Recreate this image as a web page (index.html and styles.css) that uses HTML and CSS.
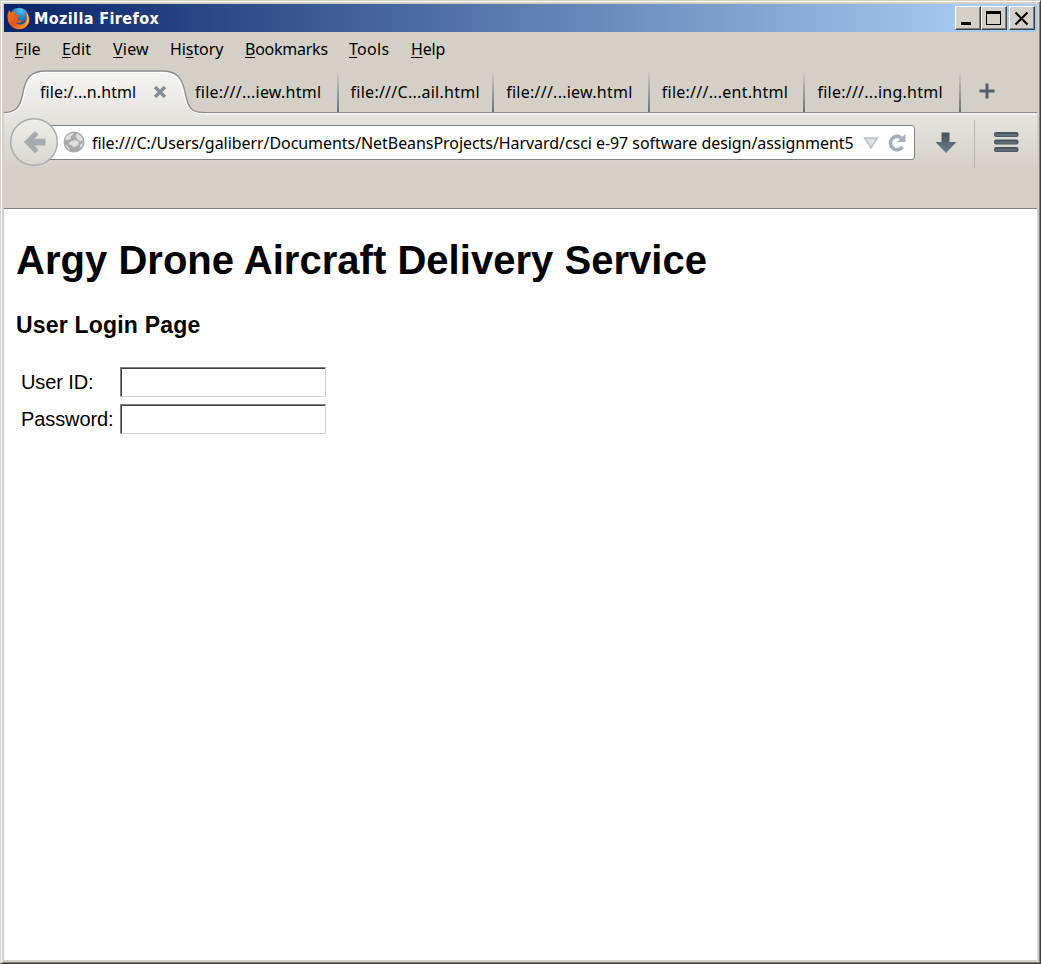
FILE: index.html
```html
<!DOCTYPE html>
<html lang="en">
<head>
<meta charset="utf-8">
<title>Mozilla Firefox</title>
<link rel="stylesheet" href="styles.css">
</head>
<body>
<div class="window">
  <header class="titlebar">
    <svg class="logo" width="24" height="24" viewBox="0 0 24 24">
      <defs>
        <radialGradient id="globe" cx=".6" cy=".1" r=".9"><stop offset="0" stop-color="#5cc4ec"/><stop offset=".5" stop-color="#1f7fc0"/><stop offset="1" stop-color="#0c3a78"/></radialGradient>
        <linearGradient id="fox" x1="0" y1="0" x2="1" y2="1"><stop offset="0" stop-color="#ee7d22"/><stop offset=".5" stop-color="#e2551a"/><stop offset="1" stop-color="#fbb426"/></linearGradient>
      </defs>
      <circle cx="12" cy="10.500" r="9.800" fill="url(#globe)"/>
      <path d="M2.100 3.100 4 5.700C5.500 4.500 7.500 4.500 9 5.100 8.500 6 8.500 7 9.500 7.700L12.500 8.500c0 1.200-2 1.500-2.400 3 .6 2.500 3.400 2 5.200 1.500-1 3-4.500 3.500-6.500 2.500 3 3.500 9 2.500 10.500-2.500.7-3 .2-6-1.500-8.500 5 3 5.800 9 3 13C17.500 23 10.500 23.500 6 20.500.5 17-1 9.500 2.100 3.100Z" fill="url(#fox)"/>
      <path d="M19.100 5c4 5 3 11-1 14.500 3-4.500 3-9 1-14.500Z" fill="#ffd640"/>
    </svg>
    <span class="caption">Mozilla Firefox</span>
    <div class="controls">
      <span class="ctl"><svg width="22" height="20" viewBox="0 0 22 20"><path d="M4 14h10v3H4z"/></svg></span>
      <span class="ctl"><svg width="22" height="20" viewBox="0 0 22 20"><path d="M3 3h15v14H3zM4 6v10h13V6z" fill-rule="evenodd"/></svg></span>
      <span class="ctl close"><svg width="22" height="20" viewBox="0 0 22 20"><path d="m4.500 4.500 12 12M16.500 4.500l-12 12" stroke="#000" stroke-width="2"/></svg></span>
    </div>
  </header>
  <nav class="menu">
    <span class="m-file"><u>F</u>ile</span><span class="m-edit"><u>E</u>dit</span><span class="m-view"><u>V</u>iew</span><span class="m-history">Hi<u>s</u>tory</span><span class="m-bookmarks"><u>B</u>ookmarks</span><span class="m-tools"><u>T</u>ools</span><span class="m-help"><u>H</u>elp</span>
  </nav>
  <div class="tabs">
    <div class="tab active">
      <svg class="shape" width="200" height="46" viewBox="0 0 200 46">
        <defs><linearGradient id="tabfill" x1="0" y1="0" x2="0" y2="1"><stop offset="0" stop-color="#f5f4f2"/><stop offset="1" stop-color="#e6e4e0"/></linearGradient></defs>
        <path d="M0 46V43C12 43 16 39 19 25 22 7 28 1.500 42 1.500H158C173 1.500 178 8 182 25 185 39 188 43 200 43V46Z" fill="url(#tabfill)"/>
        <path d="M0 43.500C12 43.500 17 39 20 26 23 8 29 2.500 43 2.500H157C171 2.500 176 9 180 26 183 40 188 43.500 200 43.500" fill="none" stroke="#fff"/>
        <path d="M0 42.500C11 42.500 15.500 38 18.500 25 21.500 7 27 1 42 1H158C173 1 178 7 181.500 24 184.500 39 188 42.500 200 42.500" fill="none" stroke="#8a8e92" stroke-width="1.300"/>
      </svg>
      <span class="label">file:/...n.html</span>
      <svg class="x" width="14" height="14" viewBox="0 0 14 14"><path d="m2 2 10 10M12 2 2 12" stroke="#858d94" stroke-width="3.400"/></svg>
    </div>
    <div class="tab"><span class="label">file:///...iew.html</span></div>
    <div class="tab"><span class="label">file:///C...ail.html</span></div>
    <div class="tab"><span class="label">file:///...iew.html</span></div>
    <div class="tab"><span class="label">file:///...ent.html</span></div>
    <div class="tab"><span class="label">file:///...ing.html</span></div>
    <svg class="plus" width="16" height="16" viewBox="0 0 16 16"><path d="M8 .5v15M.5 8h15" stroke="#53606b" stroke-width="3"/></svg>
  </div>
  <div class="toolbar">
    <svg class="back" width="50" height="50" viewBox="0 0 50 50">
      <defs><linearGradient id="backfill" x1="0" y1="0" x2="0" y2="1"><stop offset="0" stop-color="#eeedea"/><stop offset="1" stop-color="#d9d6ce"/></linearGradient></defs>
      <circle cx="25" cy="25" r="23.300" fill="url(#backfill)" stroke="#a5acb1" stroke-width="1.500"/>
      <path d="M15.500 25 26 14.500l3 3-4.600 4.700H36v5.800H24.400l4.600 4.700-3 3Z" fill="#a5abae" stroke="#a5abae" stroke-linejoin="round"/>
    </svg>
    <div class="urlbar">
      <svg class="world" width="22" height="22" viewBox="0 0 22 22">
        <circle cx="11" cy="11" r="10.500" fill="#a9a9a9"/>
        <path d="M2 8C3.500 4.500 7 2 10.500 2L10 4 7.500 5.500 8 7.500 4 9.500ZM14 2.500l4 2.500 2 4-2.500 1.500L14 8 12.500 5ZM8 10l5-1 3 2-1 3-4 2.500-2-2-3.500-1.500ZM17.500 13l2.500-.5-1.500 3.500L16.500 17ZM2.500 13l3 3.500 1.500 3C4.500 18 3 16 2.500 13Z" fill="#dedede"/>
      </svg>
      <span class="url">file:///C:/Users/galiberr/Documents/NetBeansProjects/Harvard/csci e-97 software design/assignment5</span>
      <svg class="drop" width="16" height="12" viewBox="0 0 16 12"><path d="M1.500 1h13L8 11Z" fill="#dce0e4" stroke="#b8c0c7" stroke-width="1.400"/></svg>
      <svg class="reload" width="18" height="19" viewBox="0 0 18 19"><path d="M13.500 5A6.700 6.700 0 1 0 14.500 14" fill="none" stroke="#a5afba" stroke-width="3.600"/><path d="M17.500 1v8H9Z" fill="#a5afba"/></svg>
    </div>
    <svg class="down" width="22" height="22" viewBox="0 0 22 22"><defs><linearGradient id="ink" x1="0" y1="0" x2="0" y2="1"><stop offset="0" stop-color="#46515c"/><stop offset="1" stop-color="#6e7e8c"/></linearGradient></defs><path d="M6.500.5h8V10H21.500L11 21 .5 10H6.500Z" fill="url(#ink)"/></svg>
    <div class="burger"><svg width="26" height="22" viewBox="0 0 26 22"><g fill="#4d5863"><rect x="1" y="1" width="24.500" height="5" rx="2"/><rect x="1" y="8.500" width="24.500" height="5" rx="2"/><rect x="1" y="16" width="24.500" height="5" rx="2"/></g><path d="M2.500 4h21M2.500 11.500h21M2.500 19h21" stroke="#687683" stroke-width="1.300"/></svg></div>
  </div>
  <main class="page">
    <h1>Argy Drone Aircraft Delivery Service</h1>
    <h3>User Login Page</h3>
    <form class="login">
      <label for="uid">User ID:</label><input id="uid" type="text">
      <label for="pwd">Password:</label><input id="pwd" type="password">
    </form>
  </main>
</div>
</body>
</html>
```
FILE: styles.css
```css
* { box-sizing: border-box; }
body { margin: 0; font-family: "Noto Sans", sans-serif; font-size: 16px; color: #000; }
svg { display: block; flex: none; }
.window {
  width: 1041px; height: 964px; display: flex; flex-direction: column; overflow: hidden;
  background: #d4d0c8; border: 1px solid; border-color: #d4d0c8 #404040 #404040 #d4d0c8;
  box-shadow: inset 1px 1px #fff, inset -1px -1px #808080; padding: 3px;
}
.titlebar { height: 28px; flex: none; display: flex; align-items: center; background: linear-gradient(90deg, #0a246a, #a6caf0 94%); padding: 0 2px 0 3px; }
.logo { margin-top: 1px; }
.caption { margin-left: 3px; font: bold 16px "DejaVu Sans Condensed", "DejaVu Sans", sans-serif; letter-spacing: .4px; color: #fff; white-space: nowrap; }
.controls { margin-left: auto; display: flex; }
.ctl { width: 26px; height: 24px; border: 1px solid; border-color: #fff #404040 #404040 #fff; background: #d4d0c8; box-shadow: inset -1px -1px #808080; padding: 1px; }
.close { margin-left: 2px; }
.menu { height: 38px; flex: none; padding: 5px 0 0 11px; display: flex; line-height: 24px; white-space: nowrap; }
.menu u { text-underline-offset: 2px; text-decoration-thickness: 1px; }
.m-file { width: 47px; }
.m-edit { width: 51px; letter-spacing: .1px; }
.m-view { width: 57px; letter-spacing: .2px; }
.m-history { width: 75px; letter-spacing: -.1px; }
.m-bookmarks { width: 104px; letter-spacing: -.25px; }
.m-tools { width: 62px; letter-spacing: .3px; }
.m-help { letter-spacing: -.2px; }
.tabs { height: 43px; flex: none; display: flex; border-bottom: 1px solid #8b8e91; position: relative; }
.tab { width: 155.6px; flex: none; padding: 10px 0 0 12px; line-height: 24px; letter-spacing: .25px; white-space: nowrap; background: linear-gradient(transparent, #67737d) right 0 / 2px 100% no-repeat; }
.tab.active { width: 179px; padding-left: 36px; display: flex; background: none; letter-spacing: .1px; }
.shape { position: absolute; left: 0; top: 0; }
.tab.active .label, .x { position: relative; }
.x { margin: 5px 0 0 17px; }
.plus { margin: 13px 0 0 18px; }
.toolbar { height: 96px; flex: none; display: flex; align-items: flex-start; padding: 5px 0 0 5px; border-top: 2px solid #f2f0ee; border-bottom: 1px solid #808080; background: linear-gradient(#e6e4e0, #d4d0c8 60%); }
.back { position: relative; z-index: 1; margin-top: -3px; }
.urlbar { margin: 5px 0 0 -16px; width: 872px; height: 35px; display: flex; align-items: center; background: #fff; border: 1px solid #808488; border-radius: 3px; padding-left: 19px; }
.world { margin-top: -2px; }
.url { margin-left: 7px; width: 761px; overflow: hidden; white-space: nowrap; letter-spacing: -.06px; line-height: 24px; }
.drop { margin-left: 10px; }
.reload { margin-left: 9px; }
.down { margin: 12px 0 0 20px; }
.burger { margin-left: 17px; padding: 11px 0 0 18px; height: 48px; border-left: 1px solid #b6b8b8; }
.page { flex: 1; background: #fff; padding: 27px 12px; font-family: "Liberation Sans", Arial, sans-serif; }
h1 { margin: 0; font-size: 40px; line-height: 48px; letter-spacing: .03px; white-space: nowrap; }
h3 { margin: 27px 0 0; font-size: 23px; line-height: 28px; letter-spacing: .2px; white-space: nowrap; }
.login { margin: 28px 0 0 5px; display: grid; grid-template-columns: 99px 206px; row-gap: 7px; align-items: center; font-size: 20px; line-height: 30px; }
.login label { white-space: nowrap; letter-spacing: -.1px; }
.login input { width: 206px; height: 30px; padding: 0 4px; background: #fff; border: 1px solid; border-color: #808080 #d4d0c8 #d4d0c8 #808080; box-shadow: inset 1px 1px #404040; font: 20px "Liberation Sans", sans-serif; outline: none; border-radius: 0; }
```
